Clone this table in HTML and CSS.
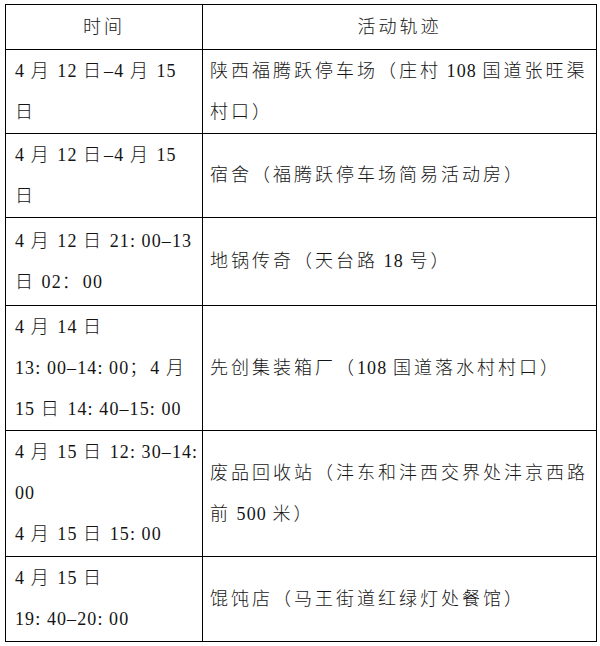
FILE: index.html
```html
<!DOCTYPE html>
<html lang="zh-CN">
<head>
<meta charset="utf-8">
<title>活动轨迹</title>
<link rel="stylesheet" href="styles.css">
</head>
<body>
<div class="page">
<table class="trace">
  <colgroup><col class="c-time"><col class="c-place"></colgroup>
  <tr class="r-head">
    <th>时间</th>
    <th>活动轨迹</th>
  </tr>
  <tr class="r-84">
    <td class="time"><span class="n">4 </span>月<span class="n"> 12 </span>日<span class="n">–4 </span>月<span class="n"> 15</span><br>日</td>
    <td class="place">陕西福腾跃停车场（庄村<span class="n"> 108 </span>国道张旺渠<br>村口）</td>
  </tr>
  <tr class="r-84">
    <td class="time"><span class="n">4 </span>月<span class="n"> 12 </span>日<span class="n">–4 </span>月<span class="n"> 15</span><br>日</td>
    <td class="place">宿舍（福腾跃停车场简易活动房）</td>
  </tr>
  <tr class="r-88">
    <td class="time"><span class="n">4 </span>月<span class="n"> 12 </span>日<span class="n"> 21: 00–13</span><br>日<span class="n"> 02</span>：<span class="n">00</span></td>
    <td class="place">地锅传奇（天台路<span class="n"> 18 </span>号）</td>
  </tr>
  <tr class="r-125">
    <td class="time"><span class="n">4 </span>月<span class="n"> 14 </span>日<br><span class="n">13: 00–14: 00</span>；<span class="n">4 </span>月<br><span class="n">15 </span>日<span class="n"> 14: 40–15: 00</span></td>
    <td class="place">先创集装箱厂（<span class="n">108 </span>国道落水村村口）</td>
  </tr>
  <tr class="r-126">
    <td class="time"><span class="n">4 </span>月<span class="n"> 15 </span>日<span class="n"> 12: 30–14:</span><br><span class="n">00</span><br><span class="n">4 </span>月<span class="n"> 15 </span>日<span class="n"> 15: 00</span></td>
    <td class="place">废品回收站（沣东和沣西交界处沣京西路<br>前<span class="n"> 500 </span>米）</td>
  </tr>
  <tr class="r-85">
    <td class="time"><span class="n">4 </span>月<span class="n"> 15 </span>日<br><span class="n">19: 40–20: 00</span></td>
    <td class="place">馄饨店（马王街道红绿灯处餐馆）</td>
  </tr>
</table>
</div>
</body>
</html>
```
FILE: styles.css
```css
html, body {
  margin: 0;
  padding: 0;
  background: #ffffff;
}

.page {
  padding: 4px 0 0 5px;
}

.trace {
  width: 591px;
  table-layout: fixed;
  border-collapse: collapse;
  border: 1px solid #000;
  font-family: "Liberation Serif", "Noto Sans CJK SC", serif;
  font-size: 18px;
  font-weight: 300;
  color: #141414;
  letter-spacing: 3px;
}

.c-time { width: 197px; }
.c-place { width: 394px; }

.trace th,
.trace td {
  border: 1px solid #000;
  padding: 0;
  line-height: 41px;
  vertical-align: middle;
  white-space: nowrap;
  overflow: hidden;
}

.trace th {
  font-weight: 300;
  text-align: center;
}

.trace td.time {
  text-align: left;
  padding-left: 9px;
}

.trace td.place {
  text-align: left;
  padding-left: 7px;
}

.n {
  letter-spacing: 1.1px;
}

.r-head { height: 45px; }
.r-84 { height: 84px; }
.r-88 { height: 88px; }
.r-125 { height: 125px; }
.r-126 { height: 126px; }
.r-85 { height: 85px; }
```
